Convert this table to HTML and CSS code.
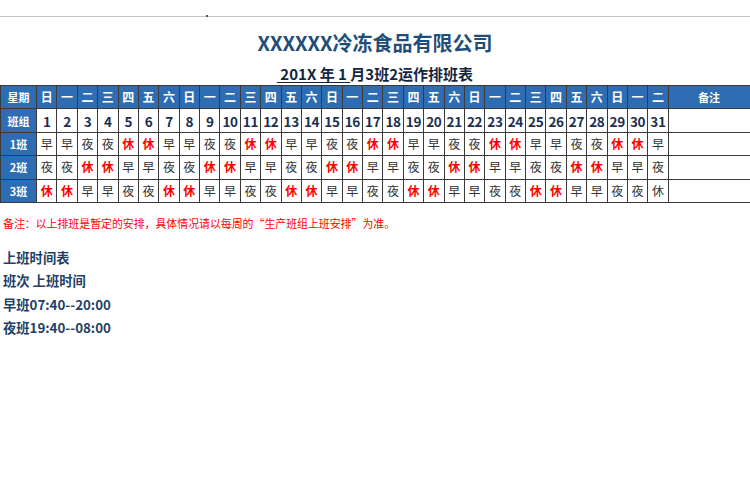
FILE: index.html
```html
<!DOCTYPE html>
<html lang="zh-CN">
<head>
<meta charset="utf-8">
<title>排班表</title>
<link rel="stylesheet" href="styles.css">
</head>
<body>
<div class="ruler"><span class="dot"></span></div>
<h1 class="title">XXXXXX冷冻食品有限公司</h1>
<h2 class="subtitle"><u>&nbsp;201X 年 1 </u>月3班2运作排班表</h2>
<table class="sheet">
<colgroup>
<col class="c-lab">
<col class="c-day"><col class="c-day"><col class="c-day"><col class="c-day"><col class="c-day"><col class="c-day"><col class="c-day"><col class="c-day"><col class="c-day"><col class="c-day"><col class="c-day"><col class="c-day"><col class="c-day"><col class="c-day"><col class="c-day"><col class="c-day"><col class="c-day"><col class="c-day"><col class="c-day"><col class="c-day"><col class="c-day"><col class="c-day"><col class="c-day"><col class="c-day"><col class="c-day"><col class="c-day"><col class="c-day"><col class="c-day"><col class="c-day"><col class="c-day"><col class="c-day">
<col class="c-note">
</colgroup>
<tr class="head">
<td class="lab">星期</td>
<td class="wd">日</td><td class="wd">一</td><td class="wd">二</td><td class="wd">三</td><td class="wd">四</td><td class="wd">五</td><td class="wd">六</td>
<td class="wd">日</td><td class="wd">一</td><td class="wd">二</td><td class="wd">三</td><td class="wd">四</td><td class="wd">五</td><td class="wd">六</td>
<td class="wd">日</td><td class="wd">一</td><td class="wd">二</td><td class="wd">三</td><td class="wd">四</td><td class="wd">五</td><td class="wd">六</td>
<td class="wd">日</td><td class="wd">一</td><td class="wd">二</td><td class="wd">三</td><td class="wd">四</td><td class="wd">五</td><td class="wd">六</td>
<td class="wd">日</td><td class="wd">一</td><td class="wd">二</td>
<td class="wd note-h">备注</td>
</tr>
<tr>
<td class="lab">班组</td>
<td class="n">1</td><td class="n">2</td><td class="n">3</td><td class="n">4</td><td class="n">5</td><td class="n">6</td><td class="n">7</td><td class="n">8</td><td class="n">9</td><td class="n">10</td><td class="n">11</td><td class="n">12</td><td class="n">13</td><td class="n">14</td><td class="n">15</td><td class="n">16</td><td class="n">17</td><td class="n">18</td><td class="n">19</td><td class="n">20</td><td class="n">21</td><td class="n">22</td><td class="n">23</td><td class="n">24</td><td class="n">25</td><td class="n">26</td><td class="n">27</td><td class="n">28</td><td class="n">29</td><td class="n">30</td><td class="n">31</td>
<td></td>
</tr>
<tr>
<td class="lab">1班</td>
<td>早</td><td>早</td><td>夜</td><td>夜</td><td class="r">休</td><td class="r">休</td>
<td>早</td><td>早</td><td>夜</td><td>夜</td><td class="r">休</td><td class="r">休</td>
<td>早</td><td>早</td><td>夜</td><td>夜</td><td class="r">休</td><td class="r">休</td>
<td>早</td><td>早</td><td>夜</td><td>夜</td><td class="r">休</td><td class="r">休</td>
<td>早</td><td>早</td><td>夜</td><td>夜</td><td class="r">休</td><td class="r">休</td>
<td>早</td>
<td></td>
</tr>
<tr>
<td class="lab">2班</td>
<td>夜</td><td>夜</td><td class="r">休</td><td class="r">休</td><td>早</td><td>早</td>
<td>夜</td><td>夜</td><td class="r">休</td><td class="r">休</td><td>早</td><td>早</td>
<td>夜</td><td>夜</td><td class="r">休</td><td class="r">休</td><td>早</td><td>早</td>
<td>夜</td><td>夜</td><td class="r">休</td><td class="r">休</td><td>早</td><td>早</td>
<td>夜</td><td>夜</td><td class="r">休</td><td class="r">休</td><td>早</td><td>早</td>
<td>夜</td>
<td></td>
</tr>
<tr>
<td class="lab">3班</td>
<td class="r">休</td><td class="r">休</td><td>早</td><td>早</td><td>夜</td><td>夜</td>
<td class="r">休</td><td class="r">休</td><td>早</td><td>早</td><td>夜</td><td>夜</td>
<td class="r">休</td><td class="r">休</td><td>早</td><td>早</td><td>夜</td><td>夜</td>
<td class="r">休</td><td class="r">休</td><td>早</td><td>早</td><td>夜</td><td>夜</td>
<td class="r">休</td><td class="r">休</td><td>早</td><td>早</td><td>夜</td><td>夜</td>
<td>休</td>
<td></td>
</tr>
</table>
<p class="remark">备注：以上排班是暂定的安排，具体情况请以每周的“生产班组上班安排”为准。</p>
<div class="times">
<p>上班时间表</p>
<p>班次 上班时间</p>
<p>早班07:40--20:00</p>
<p>夜班19:40--08:00</p>
</div>
</body>
</html>
```
FILE: styles.css
```css
html, body {
  margin: 0;
  padding: 0;
  background: #ffffff;
}
body {
  font-family: "Noto Sans CJK SC", "Noto Sans", sans-serif;
  width: 750px;
  overflow: hidden;
}
.ruler {
  position: relative;
  height: 1px;
  margin-top: 16px;
  background: #c4c4c4;
}
.ruler .dot {
  position: absolute;
  left: 206px;
  top: -1px;
  width: 2px;
  height: 2px;
  background: #555;
}
.title {
  margin: 14px 0 0;
  font-size: 20px;
  line-height: 24px;
  font-weight: 700;
  color: #1f4e79;
  text-align: center;
}
.subtitle {
  margin: 9px 0 0;
  font-size: 15px;
  line-height: 19px;
  font-weight: 700;
  color: #14253f;
  text-align: center;
}
.subtitle u {
  text-decoration-thickness: 1px;
  text-underline-offset: 2px;
}
.sheet {
  margin-top: 2px;
  width: 750px;
  table-layout: fixed;
  border-collapse: collapse;
}
.c-lab { width: 36px; }
.c-day { width: 20.39px; }
.c-note { width: 82px; }
.sheet td {
  height: 23.4px;
  padding: 0;
  border: 1px solid #3a3a3a;
  text-align: center;
  vertical-align: middle;
  font-size: 12px;
  line-height: 14px;
  color: #333333;
  white-space: nowrap;
  overflow: hidden;
  box-sizing: border-box;
}
.sheet td.lab,
.sheet td.wd {
  background: #2e6db4;
  color: #ffffff;
  font-weight: 700;
}
.sheet td.lab {
  font-size: 11px;
}
.sheet td.wd {
  font-size: 12px;
}
.sheet td.note-h {
  font-size: 11px;
}
.sheet td.n {
  font-size: 13.5px;
  font-weight: 700;
  color: #1b3050;
  letter-spacing: -0.4px;
}
.sheet td.r {
  color: #ff0000;
  font-weight: 700;
}
.remark {
  margin: 12px 0 0;
  padding-left: 3px;
  font-size: 10.9px;
  line-height: 16px;
  color: #ff0000;
  white-space: nowrap;
}
.times {
  margin-top: 15px;
  padding-left: 3px;
}
.times p {
  margin: 0;
  font-size: 13.3px;
  line-height: 23.4px;
  font-weight: 700;
  color: #1f3f66;
}
```
